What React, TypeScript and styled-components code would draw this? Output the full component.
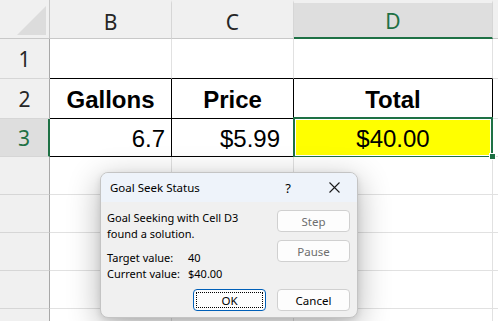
import { Fragment } from 'react';
import styled, { createGlobalStyle } from 'styled-components';

const GREEN = '#1e7145';
const GRID = '#e1e1e1';

const GlobalStyle = createGlobalStyle`
  html, body {
    margin: 0;
    padding: 0;
    background: #ffffff;
    overflow: hidden;
  }
`;

const Sheet = styled.div`
  position: relative;
  width: 498px;
  height: 321px;
  overflow: hidden;
  display: grid;
  grid-template-columns: 50px 122px 122px 199px 1fr;
  grid-template-rows: 39px 40px 40px 38px repeat(5, 38px);
  font-family: 'Liberation Sans', Arial, sans-serif;
  background: #fff;
`;

const Corner = styled.div`
  box-sizing: border-box;
  background: #f0f0f0;
  border-right: 1px solid #c8c8c8;
  border-bottom: 1px solid #c8c8c8;
  display: flex;
  align-items: flex-end;
  justify-content: flex-end;
  padding: 0 3px 3px 0;
`;

const CornerTriangle = styled.div`
  width: 0;
  height: 0;
  border-left: 29px solid transparent;
  border-bottom: 29px solid #dcdcdc;
`;

const ColHeader = styled.div<{ $active?: boolean }>`
  box-sizing: border-box;
  background: ${p => (p.$active ? '#dedede' : '#f0f0f0')};
  border-top: 3px solid #f0f0f0;
  border-right: 1px solid #d6d6d6;
  border-bottom: ${p => (p.$active ? `2px solid ${GREEN}` : '1px solid #c8c8c8')};
  color: ${p => (p.$active ? GREEN : '#262626')};
  font-family: 'Noto Sans', 'Open Sans', sans-serif;
  font-size: 21px;
  display: flex;
  align-items: center;
  justify-content: center;
  padding-top: 2px;
`;

const RowHeader = styled.div<{ $active?: boolean }>`
  box-sizing: border-box;
  background: ${p => (p.$active ? '#dedede' : '#f0f0f0')};
  border-right: ${p => (p.$active ? `2px solid ${GREEN}` : '1px solid #a8a8a8')};
  border-bottom: 1px solid #d6d6d6;
  color: ${p => (p.$active ? GREEN : '#262626')};
  font-family: 'Noto Sans', 'Open Sans', sans-serif;
  font-size: 21px;
  display: flex;
  align-items: center;
  justify-content: center;
`;

const Cell = styled.div<{
  $align?: 'left' | 'center' | 'right';
  $bold?: boolean;
  $pad?: number;
  $right?: string;
  $bottom?: string;
  $fill?: string;
}>`
  box-sizing: border-box;
  position: relative;
  background: ${p => p.$fill || '#fff'};
  border-right: 1px solid ${p => p.$right || GRID};
  border-bottom: 1px solid ${p => p.$bottom || GRID};
  font-size: 24px;
  font-weight: ${p => (p.$bold ? 700 : 400)};
  color: #000;
  display: flex;
  align-items: center;
  justify-content: ${p =>
    p.$align === 'right' ? 'flex-end' : p.$align === 'center' ? 'center' : 'flex-start'};
  padding: 2px ${p => p.$pad ?? 4}px 0 4px;
  white-space: nowrap;
`;

const SelectedCell = styled(Cell)`
  &::after {
    content: '';
    position: absolute;
    left: -1px;
    top: -2px;
    right: -1px;
    bottom: -2px;
    border: 2px solid ${GREEN};
    box-shadow: inset 0 0 0 1px #fff;
    pointer-events: none;
  }
  &::before {
    content: '';
    position: absolute;
    right: -4px;
    bottom: -4px;
    width: 5px;
    height: 5px;
    background: ${GREEN};
    border: 1px solid #fff;
    z-index: 2;
  }
`;

/* ---- dialog ---- */

const Dialog = styled.div`
  position: absolute;
  left: 100px;
  top: 172px;
  width: 258px;
  height: 146px;
  box-sizing: border-box;
  border: 1px solid #c4c4c4;
  border-radius: 8px;
  background: #f0f0f0;
  box-shadow: 0 8px 32px rgba(0, 0, 0, 0.3), 0 2px 6px rgba(0, 0, 0, 0.1);
  overflow: hidden;
  font-family: 'Noto Sans', 'Open Sans', sans-serif;
  font-size: 11px;
  color: #000;
  display: flex;
  flex-direction: column;
  z-index: 5;
`;

const TitleBar = styled.div`
  height: 29px;
  flex: none;
  background: #eef3fa;
  display: flex;
  align-items: center;
  padding-left: 9px;
  font-size: 11.5px;
`;

const Title = styled.span`
  flex: 1;
`;

const TitleBtn = styled.div`
  width: 46px;
  height: 29px;
  display: flex;
  align-items: center;
  justify-content: center;
  font-size: 13px;
`;

const Body = styled.div`
  flex: 1;
  display: flex;
  flex-direction: column;
  padding: 8px 7px 6px 6px;
`;

const TopRow = styled.div`
  display: flex;
  justify-content: space-between;
`;

const Message = styled.div`
  line-height: 16px;
`;

const Para = styled.p`
  margin: 0 0 8px;
`;

const Values = styled.div`
  display: grid;
  grid-template-columns: 81px auto;
`;

const ButtonCol = styled.div`
  display: flex;
  flex-direction: column;
  gap: 8px;
`;

const Footer = styled.div`
  margin-top: auto;
  display: flex;
  justify-content: flex-end;
  gap: 11px;
`;

const Button = styled.button<{ $focus?: boolean; $disabled?: boolean }>`
  width: 73px;
  height: 22px;
  box-sizing: border-box;
  border-radius: 4px;
  border: 1px solid ${p => (p.$focus ? '#005fb8' : '#d0d0d0')};
  background: #fdfdfd;
  font-family: inherit;
  font-size: 11.5px;
  color: ${p => (p.$disabled ? '#6e6e6e' : '#000')};
  padding: 0;
  display: flex;
  align-items: center;
  justify-content: center;
  position: relative;
  ${p =>
    p.$focus &&
    `
    &::after {
      content: '';
      position: absolute;
      inset: 2px;
      border: 1px dotted #000;
    }
  `}
`;

const CloseIcon = () => (
  <svg width="11" height="11" viewBox="0 0 11 11">
    <path d="M0.5 0.5 L10.5 10.5 M10.5 0.5 L0.5 10.5" stroke="#1a1a1a" strokeWidth="1.1" fill="none" />
  </svg>
);

const extraRows = [4, 5, 6, 7, 8];

export default function App() {
  return (
    <>
      <GlobalStyle />
      <Sheet>
        <Corner>
          <CornerTriangle />
        </Corner>
        <ColHeader>B</ColHeader>
        <ColHeader>C</ColHeader>
        <ColHeader $active>D</ColHeader>
        <ColHeader />

        <RowHeader>1</RowHeader>
        <Cell $bottom="#000" />
        <Cell $bottom="#000" />
        <Cell $bottom="#000" />
        <Cell />

        <RowHeader>2</RowHeader>
        <Cell $bold $align="center" $right="#000" $bottom="#000">Gallons</Cell>
        <Cell $bold $align="center" $right="#000" $bottom="#000">Price</Cell>
        <Cell $bold $align="center" $right="#000" $bottom="#000">Total</Cell>
        <Cell />

        <RowHeader $active>3</RowHeader>
        <Cell $align="right" $pad={6} $right="#000" $bottom="#000">6.7</Cell>
        <Cell $align="right" $pad={13} $right="#000" $bottom="#000">$5.99</Cell>
        <SelectedCell $align="center" $fill="#ffff00" $right="#000" $bottom="#000">$40.00</SelectedCell>
        <Cell />

        {extraRows.map(r => (
          <Fragment key={r}>
            <RowHeader />
            <Cell />
            <Cell />
            <Cell />
            <Cell />
          </Fragment>
        ))}

        <Dialog>
          <TitleBar>
            <Title>Goal Seek Status</Title>
            <TitleBtn>?</TitleBtn>
            <TitleBtn>
              <CloseIcon />
            </TitleBtn>
          </TitleBar>
          <Body>
            <TopRow>
              <Message>
                <Para>
                  Goal Seeking with Cell D3
                  <br />
                  found a solution.
                </Para>
                <Values>
                  <span>Target value:</span>
                  <span>40</span>
                  <span>Current value:</span>
                  <span>$40.00</span>
                </Values>
              </Message>
              <ButtonCol>
                <Button $disabled>Step</Button>
                <Button $disabled>Pause</Button>
              </ButtonCol>
            </TopRow>
            <Footer>
              <Button $focus>OK</Button>
              <Button>Cancel</Button>
            </Footer>
          </Body>
        </Dialog>
      </Sheet>
    </>
  );
}
